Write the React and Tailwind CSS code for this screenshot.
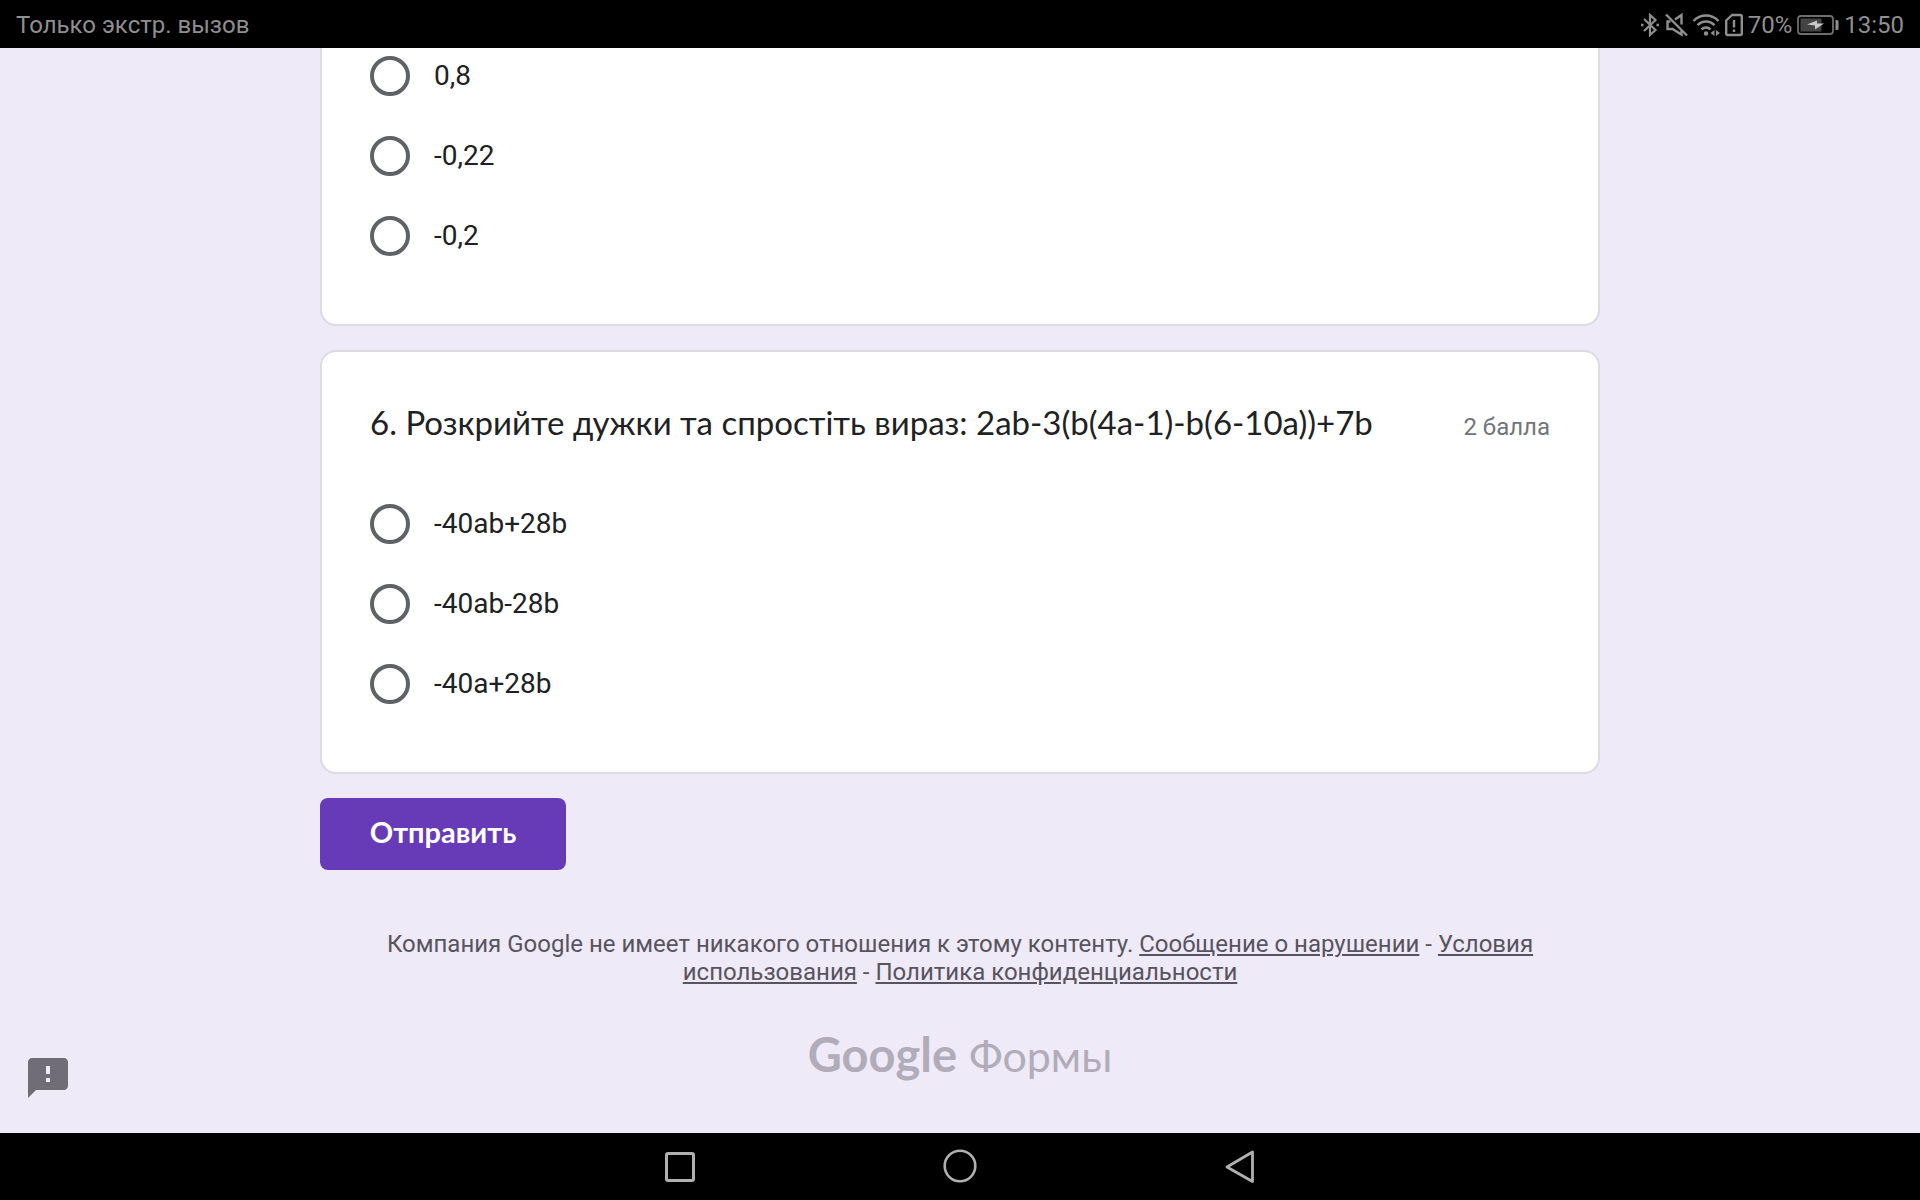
import { useState } from "react";
import { MdFeedback } from "react-icons/md";

const previousOptions = ["0,8", "-0,22", "-0,2"];
const options = ["-40ab+28b", "-40ab-28b", "-40a+28b"];

function RadioList({ name, label, items }) {
  const [value, setValue] = useState("");

  return (
    <div role="radiogroup" aria-label={label} className="flex flex-col gap-10">
      {items.map((item) => (
        <label
          key={item}
          className="flex h-10 items-center gap-6 text-[28px] leading-10 text-[#202124]"
        >
          <input
            type="radio"
            name={name}
            value={item}
            checked={value === item}
            onChange={() => setValue(item)}
            className="size-10 shrink-0 appearance-none rounded-full border-4 border-[#5f6368] checked:border-[12px] checked:border-[#673ab7]"
          />
          {item}
        </label>
      ))}
    </div>
  );
}

function StatusBar() {
  return (
    <header className="flex h-12 items-center justify-between bg-black px-4 pt-0.5 text-2xl text-[#8f8f8f]">
      <span>Только экстр. вызов</span>
      <div className="flex items-center gap-1">
        {/* bluetooth */}
        <svg width="20" height="24" viewBox="0 0 20 24" fill="none" stroke="currentColor" strokeWidth="2.200">
          <path d="M4 6 15.500 17l-5.500 5V2l5.500 5L4 18" />
          <path d="M1 12h2.500M16.500 12H19" strokeWidth="2.500" />
        </svg>
        {/* sound off */}
        <svg width="24" height="24" viewBox="0 0 24 24" fill="none" stroke="currentColor" strokeWidth="2.400">
          <path d="M2 1.500l21 21" />
          <path d="M11 6.500 17.500 2v9.500M6.500 8.500H3.500v7.500h5l9 5.500v-4" />
        </svg>
        {/* wifi */}
        <svg width="28" height="24" viewBox="0 0 28 24" fill="none" stroke="currentColor" strokeWidth="2.500">
          <path d="M1.500 8C8.500 0.800 19.500 0.800 26.500 8M5.500 12.200c5-5 12-5 17 0M9.500 16.500c2.500-2.700 6.500-2.700 9 0" />
          <circle cx="14" cy="20.500" r="2.200" fill="currentColor" stroke="none" />
          <path d="M22.500 17v6l-4-3zM24 17v6l4-3z" fill="currentColor" stroke="none" />
        </svg>
        {/* sim */}
        <svg width="20" height="24" viewBox="0 0 20 24" fill="none" stroke="currentColor" strokeWidth="2.400">
          <path d="M8 2h8.300A1.500 1.500 0 0 1 17.800 3.500v17a1.500 1.500 0 0 1-1.500 1.500H3.700a1.500 1.500 0 0 1-1.500-1.500V7.500z" strokeLinejoin="round" />
          <path d="M10 7v7.500M10 16.500v2.500" />
        </svg>
        <span>70%</span>
        {/* battery */}
        <svg width="44" height="24" viewBox="2 0 44 24" fill="none">
          <rect x="4" y="3" width="35" height="18" rx="3" stroke="#6e6e6e" strokeWidth="1.800" />
          <rect x="6.500" y="5.500" width="21" height="13" fill="#444" />
          <path d="M41.500 7h1.500a1.500 1.500 0 0 1 1.500 1.500v7a1.500 1.500 0 0 1-1.500 1.500h-1.500z" fill="#8f8f8f" />
          <path d="M13 11.500 23 7.500v3h7l-9 6v-4z" fill="#c8c8c8" />
        </svg>
        <span>13:50</span>
      </div>
    </header>
  );
}

function NavBar() {
  return (
    <nav className="flex h-[67px] items-center justify-center bg-black text-[#b0b0b0]">
      <button aria-label="Недавние" className="flex w-[280px] justify-center">
        <svg width="36" height="36" viewBox="0 0 36 36" fill="none" stroke="currentColor" strokeWidth="3">
          <rect x="4.500" y="4.500" width="27" height="27" rx="1.500" />
        </svg>
      </button>
      <button aria-label="Домой" className="flex w-[280px] justify-center">
        <svg width="36" height="36" viewBox="0 0 36 36" fill="none" stroke="currentColor" strokeWidth="2.600">
          <circle cx="18" cy="17" r="15.300" />
        </svg>
      </button>
      <button aria-label="Назад" className="flex w-[280px] justify-center">
        <svg width="36" height="36" viewBox="0 0 36 36" fill="none" stroke="currentColor" strokeWidth="2.800" strokeLinejoin="round">
          <path d="M30.500 3v29.500L5 18z" />
        </svg>
      </button>
    </nav>
  );
}

export default function App() {
  return (
    <div className="flex min-h-screen flex-col bg-[#eeeaf8] font-[Roboto,sans-serif]">
      <StatusBar />

      <main className="relative flex-1">
        <form
          onSubmit={(e) => e.preventDefault()}
          className="mx-auto flex max-w-[1280px] flex-col items-start gap-6"
        >
          <section className="w-full rounded-b-2xl border-2 border-t-0 border-[#dadce0] bg-white px-12 pt-2 pb-[68px]">
            <RadioList name="q5" label="5" items={previousOptions} />
          </section>

          <section className="w-full rounded-2xl border-2 border-[#dadce0] bg-white px-12 pt-12 pb-[68px]">
            <div className="mb-[60px] flex items-baseline justify-between">
              <h2 className="font-[Lato,sans-serif] text-[33px] leading-11 text-[#202124]">
                6. Розкрийте дужки та спростіть вираз: 2ab-3(b(4a-1)-b(6-10a))+7b
              </h2>
              <span className="text-2xl text-[#70757a]">2 балла</span>
            </div>
            <RadioList name="q6" label="6" items={options} />
          </section>

          <button
            type="submit"
            className="h-[72px] min-w-[246px] rounded-lg bg-[#673ab7] px-12 pb-1 font-[Lato,sans-serif] text-[29px] font-bold text-white"
          >
            Отправить
          </button>
        </form>

        <footer className="mx-auto mt-[60px] max-w-[1184px] text-center text-2xl leading-7 text-[#58545f]">
          <p>
            Компания Google не имеет никакого отношения к этому контенту.{" "}
            <a href="#report" className="underline">Сообщение о нарушении</a> -{" "}
            <a href="#terms" className="underline">Условия использования</a> -{" "}
            <a href="#privacy" className="underline">Политика конфиденциальности</a>
          </p>
          <a
            href="#forms"
            className="mt-11 inline-flex items-baseline gap-3 font-[Lato,sans-serif] leading-12 text-[#b1acb9]"
          >
            <span className="text-[47px] font-bold">Google</span>
            <span className="text-[43px]">Формы</span>
          </a>
        </footer>

        <button
          aria-label="Сообщить о проблеме"
          className="absolute bottom-[31px] left-6 text-[#716d77]"
        >
          <MdFeedback size={48} />
        </button>
      </main>

      <NavBar />
    </div>
  );
}
